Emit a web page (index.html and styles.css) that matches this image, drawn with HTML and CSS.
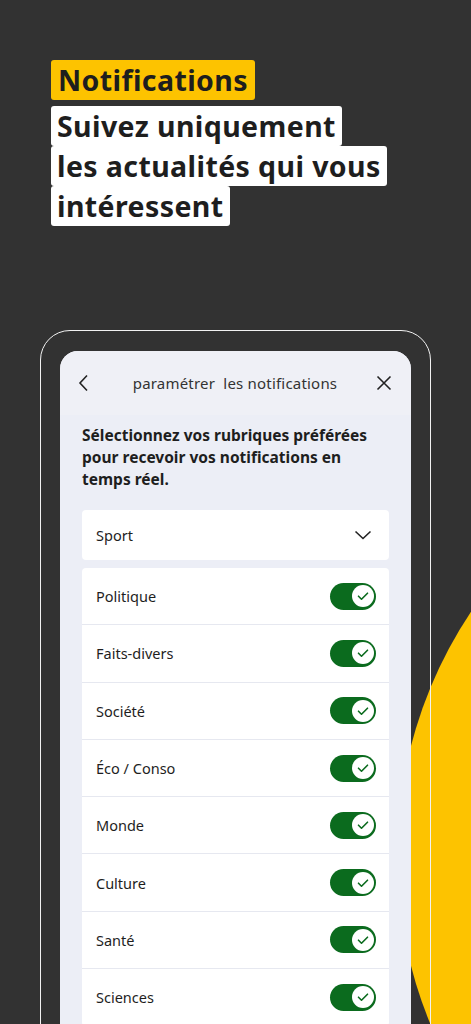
FILE: index.html
```html
<!DOCTYPE html>
<html lang="fr">

<head>
	<meta name="viewport" content="width=device-width, initial-scale=1">
	<title>Notifications</title>
	<link rel="stylesheet" href="styles.css">
</head>

<body>
	<div class="blob"></div>
	<header class="hero">
		<span class="tag">Notifications</span>
		<h1>
			<span>Suivez uniquement</span>
			<span>les actualités qui vous</span>
			<span>intéressent</span>
		</h1>
	</header>
	<section class="device">
		<div class="screen">
			<nav>
				<svg width="12" height="18" viewBox="0 0 12 18"><path d="M9 1.5 2 9l7 7.5" /></svg>
				<span class="nav-title">paramétrer&nbsp; les notifications</span>
				<svg width="16" height="16" viewBox="0 0 16 16"><path d="M1.5 1.5l13 13M14.5 1.5l-13 13" /></svg>
			</nav>
			<main>
				<p class="intro">Sélectionnez vos rubriques préférées pour recevoir vos notifications en temps réel.</p>
				<div class="card select">
					<span>Sport</span>
					<svg width="18" height="10" viewBox="0 0 18 10"><path d="M1.5 1.5 9 8.5l7.5-7" /></svg>
				</div>
				<ul class="card topics">
					<li>Politique<span class="switch"></span></li>
					<li>Faits-divers<span class="switch"></span></li>
					<li>Société<span class="switch"></span></li>
					<li>Éco / Conso<span class="switch"></span></li>
					<li>Monde<span class="switch"></span></li>
					<li>Culture<span class="switch"></span></li>
					<li>Santé<span class="switch"></span></li>
					<li>Sciences<span class="switch"></span></li>
				</ul>
			</main>
		</div>
	</section>
</body>

</html>
```

FILE: styles.css
```css
* {
	box-sizing: border-box;
}

body,
html {
	margin: 0;
	height: 1024px;
	overflow: hidden;
	background-color: #323232;
	font-family: "Noto Sans", "Open Sans", sans-serif;
	color: #1e1e1e;
}

body {
	position: relative;
}

/* big yellow disc peeking behind the phone */
.blob {
	position: absolute;
	left: 397px;
	top: 416px;
	width: 880px;
	height: 880px;
	border-radius: 50%;
	background-color: #fdc300;
}

.hero {
	position: relative;
	display: flex;
	flex-direction: column;
	align-items: flex-start;
	padding: 60px 0 0 51px;
}

.tag {
	display: block;
	height: 40px;
	line-height: 40px;
	padding: 0 7px;
	background-color: #fdc300;
	border-radius: 3px;
	font-size: 28.5px;
	font-weight: 700;
	letter-spacing: .4px;
}

h1 {
	display: flex;
	flex-direction: column;
	align-items: flex-start;
	margin: 6px 0 0;
	font-size: 28.5px;
	font-weight: 700;
	letter-spacing: .4px;
}

h1 span {
	display: block;
	height: 40px;
	line-height: 40px;
	padding: 0 6px;
	background-color: #fff;
	border-radius: 3px;
}

.device {
	position: relative;
	margin: 104px 0 0 40px;
	width: 391px;
	height: 760px;
	padding: 20px 19px 0;
	border: 1.5px solid #f2f2f2;
	border-radius: 30px;
}

.screen {
	height: 100%;
	background-color: #eceef6;
	border-radius: 18px 18px 0 0;
}

nav {
	display: flex;
	align-items: center;
	justify-content: space-between;
	height: 64px;
	padding: 0 19px 0 18px;
	background-color: #eff0f6;
	border-radius: 18px 18px 0 0;
}

nav svg path,
.select svg path {
	fill: none;
	stroke: #222;
	stroke-width: 1.6;
}

.nav-title {
	flex: 1;
	text-align: center;
	font-size: 15px;
	letter-spacing: .2px;
	color: #333;
	padding-left: 4px;
}

main {
	padding: 9px 22px 0;
}

.intro {
	margin: 0 0 20px;
	font-size: 15.5px;
	font-weight: 700;
	line-height: 22px;
}

.card {
	background-color: #fff;
	border-radius: 4px;
}

.select {
	display: flex;
	align-items: center;
	justify-content: space-between;
	height: 50px;
	padding: 0 17px 0 14px;
	font-size: 14.5px;
	margin-bottom: 8px;
}

.topics {
	list-style: none;
	margin: 0;
	padding: 0;
}

.topics li {
	display: flex;
	align-items: center;
	justify-content: space-between;
	height: 57.3px;
	padding: 0 13px 0 14px;
	font-size: 14.5px;
	border-bottom: 1px solid #e6e8f0;
}

.switch {
	position: relative;
	width: 46px;
	height: 27px;
	border-radius: 14px;
	background-color: #0b6b1e;
}

.switch:after {
	content: "";
	position: absolute;
	top: 2.5px;
	right: 2.5px;
	width: 22px;
	height: 22px;
	border-radius: 50%;
	background: #fff url("data:image/svg+xml,%3Csvg xmlns='http://www.w3.org/2000/svg' width='22' height='22'%3E%3Cpath d='M6.5 11.2l3 3 6-6' fill='none' stroke='%230b6b1e' stroke-width='1.6' stroke-linecap='round' stroke-linejoin='round'/%3E%3C/svg%3E") center no-repeat;
}
```
